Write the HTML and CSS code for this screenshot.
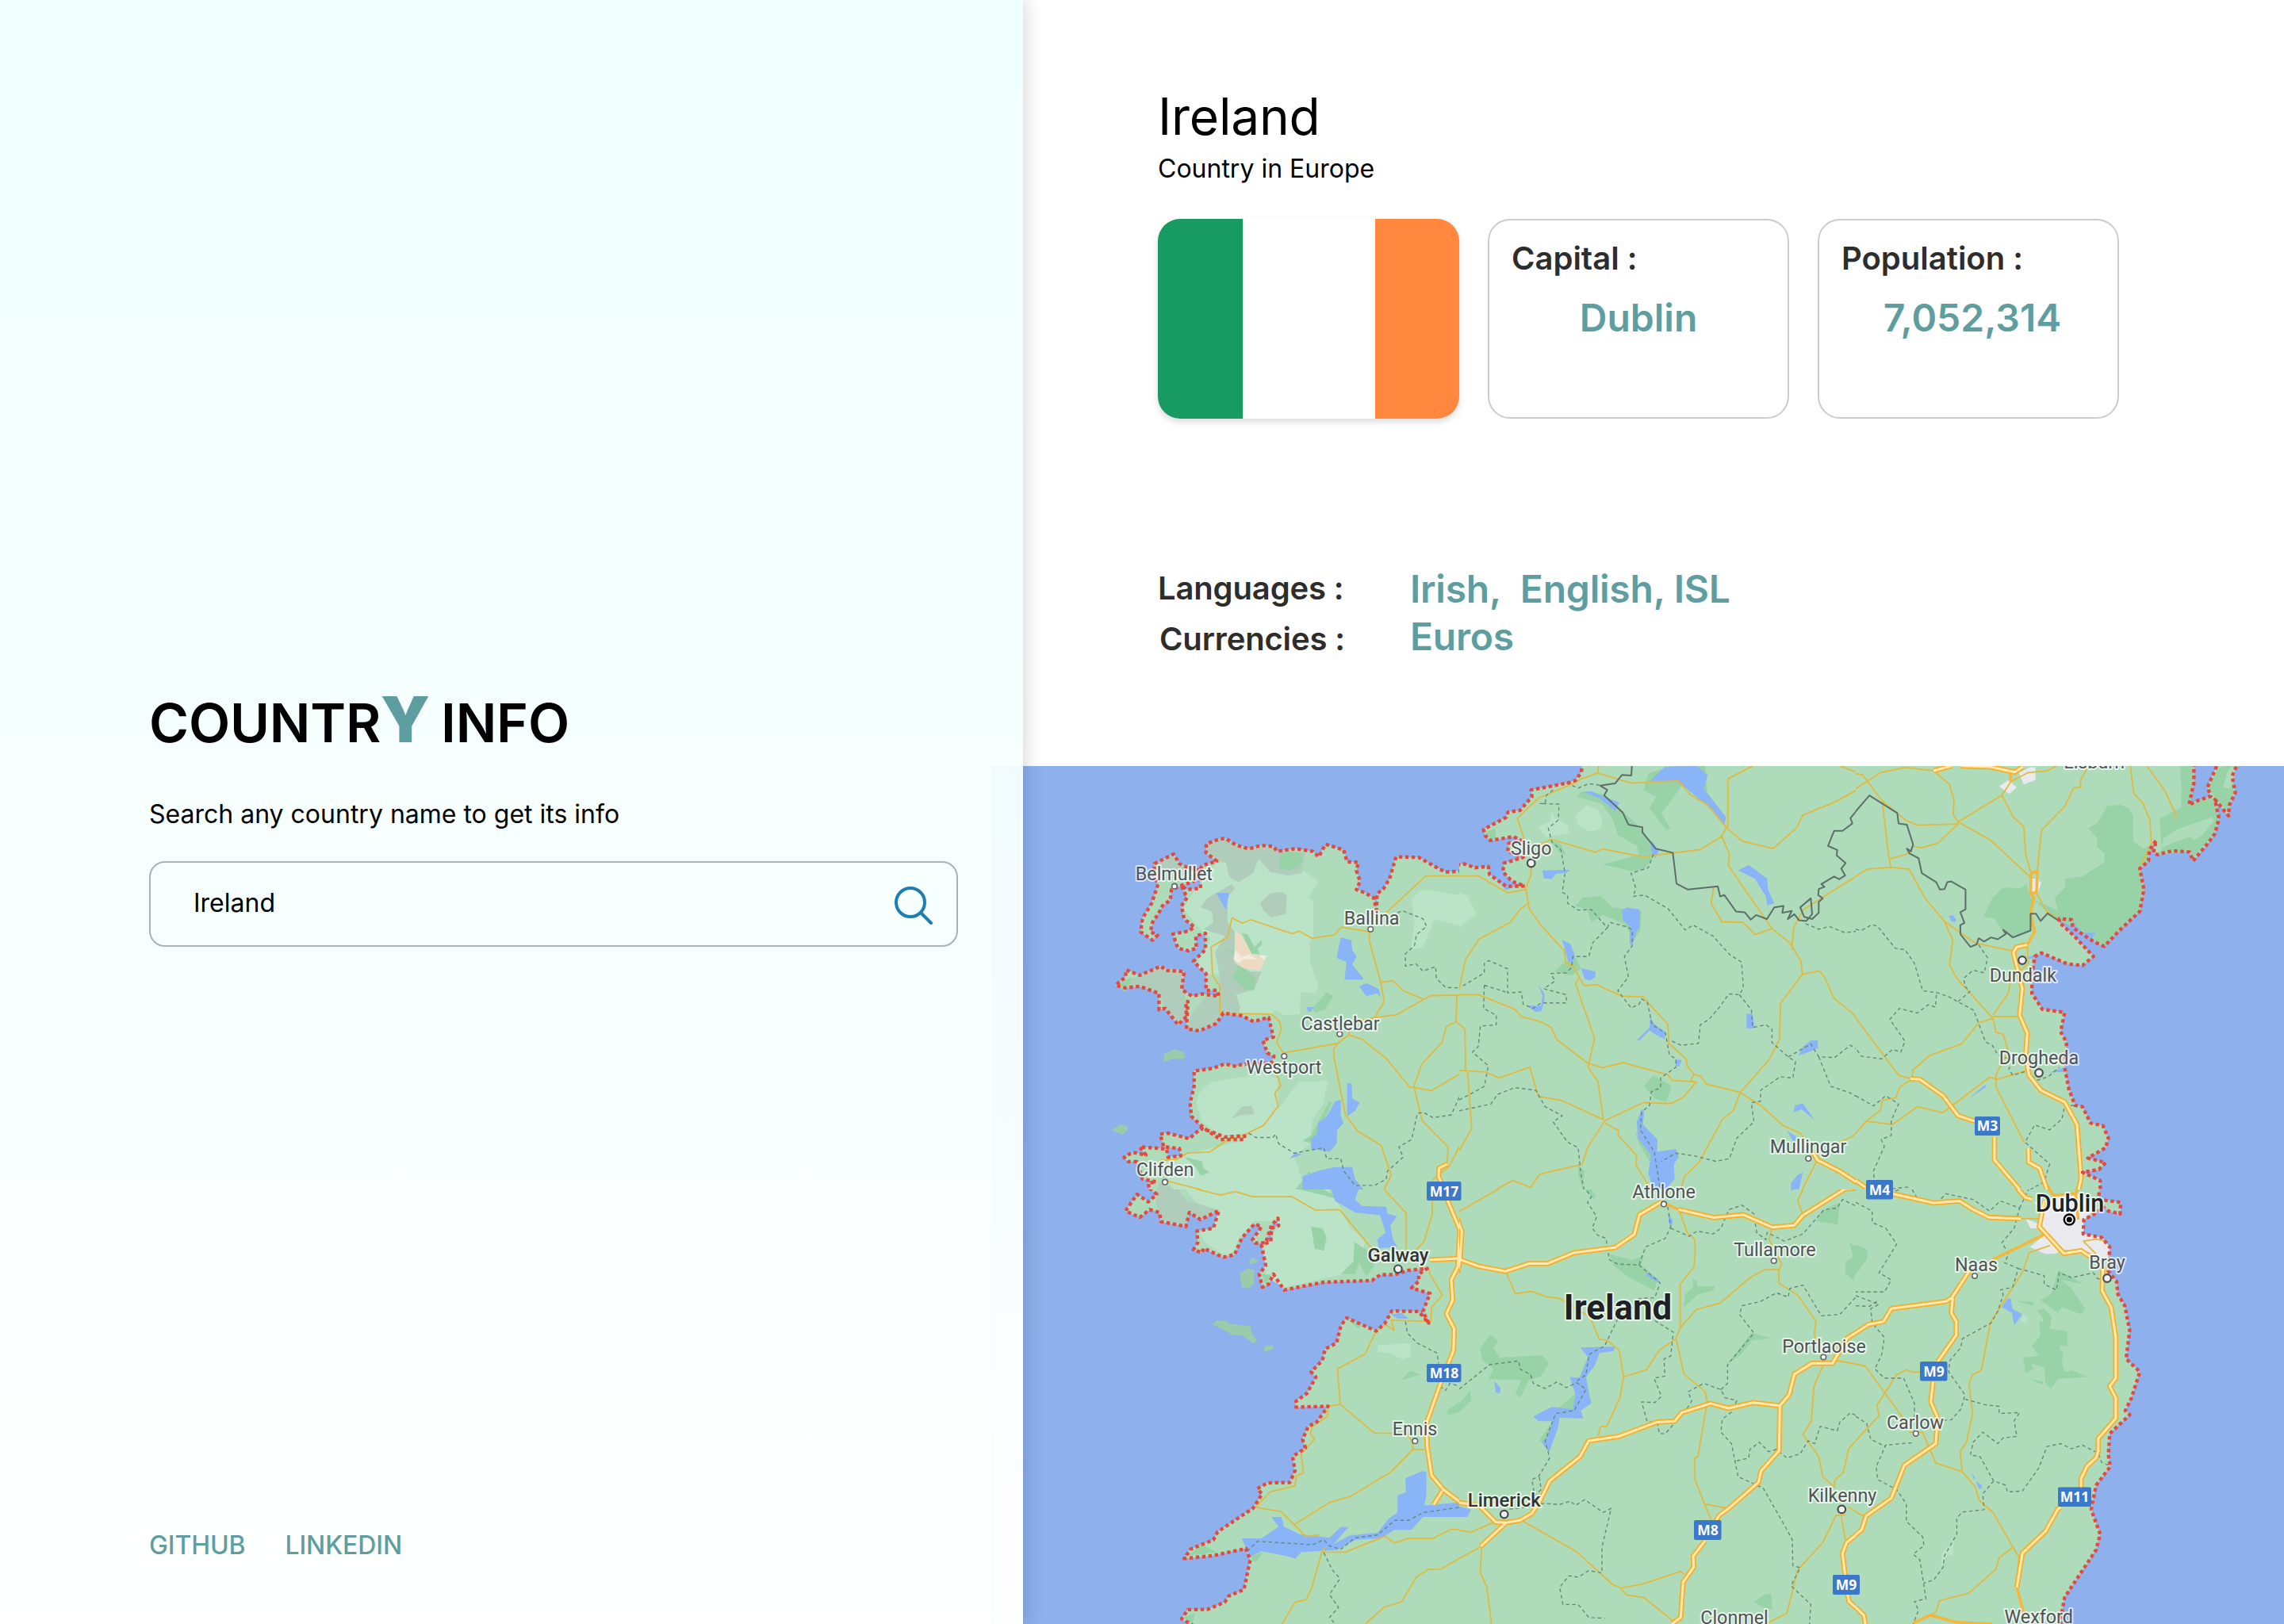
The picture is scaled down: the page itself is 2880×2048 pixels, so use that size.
FILE: index.html
```html
<!DOCTYPE html>
<html lang="en">
<head>
<meta charset="utf-8">
<title>Country Info</title>
<link rel="stylesheet" href="styles.css">
</head>
<body>
<div class="app">
  <aside class="search-panel">
    <h1 class="brand">COUNTR<span class="brand-y">Y</span> INFO</h1>
    <p class="hint">Search any country name to get its info</p>
    <div class="search-box">
      <span class="search-value">Ireland</span>
      <svg class="search-icon" viewBox="0 0 50 50"><circle cx="22" cy="22" r="18"/><path d="M35.500 35.500 L48 48"/></svg>
    </div>
    <nav class="links"><a>GITHUB</a><a>LINKEDIN</a></nav>
  </aside>
  <main class="details">
    <section class="info">
      <h2 class="country">Ireland</h2>
      <p class="region">Country in Europe</p>
      <div class="cards">
        <div class="flag"><i class="green"></i><i class="white"></i><i class="orange"></i></div>
        <div class="card"><span class="label">Capital :</span><span class="value">Dublin</span></div>
        <div class="card"><span class="label">Population :</span><span class="value value-wide">7,052,314</span></div>
      </div>
      <div class="facts">
        <span class="label">Languages :</span><span class="value">Irish,&nbsp; English, ISL</span>
        <span class="label label-second">Currencies :</span><span class="value">Euros</span>
      </div>
    </section>
    <svg class="map" viewBox="1290 966 1590 1082">
      <!-- north west -->
      <svg x="1280" y="960" width="560" height="540" viewBox="0 0 1568 1568" preserveAspectRatio="none">
        <g class="land">
          <path id="nw" d="M1600 400 L1520 406 L1490 390 L1425 352 L1345 350 L1322 430 L1300 468 L1278 485 L1276 545 L1266 500 L1235 482 L1205 470 L1218 440 L1205 400 L1212 370 L1172 368 L1160 325 L1096 304 L1072 350 L1052 330 L990 320 L925 330 L912 312 L868 308 L826 321 L780 307 L745 284 L722 284 L675 303 L674 335 L712 366 L660 382 L652 400 L655 465 L605 470 L587 455 L607 500 L587 530 L597 578 L633 607 L612 622 L557 633 L575 685 L612 694 L640 685 L638 640 L672 630 L672 690 L630 733 L674 778 L674 840 L712 838 L720 860 L660 852 L625 860 L608 850 L588 835 L597 770 L532 766 L515 750 L440 784 L392 764 L390 790 L355 820 L390 830 L440 824 L508 850 L508 910 L530 905 L575 965 L605 935 L603 880 L610 880 L605 980 L650 987 L712 960 L735 922 L800 932 L842 953 L895 938 L912 1010 L875 1022 L890 1068 L914 1080 L905 1105 L800 1110 L782 1118 L740 1108 L700 1124 L632 1134 L632 1190 L618 1250 L622 1300 L665 1342 L725 1385 L810 1385 L810 1372 L740 1376 L690 1355 L655 1345 L615 1382 L540 1362 L512 1365 L525 1412 L580 1418 L585 1445 L540 1450 L535 1420 L440 1412 L462 1442 L415 1432 L385 1450 L400 1466 L430 1466 L440 1500 L450 1530 L498 1540 L470 1545 L480 1600 L1600 1600 Z"/>
          <path id="mullet" d="M652 400 L605 388 L580 375 L560 340 L492 375 L490 420 L505 450 L482 520 L450 575 L443 625 L485 655 L503 637 L478 625 L485 590 L505 560 L520 530 L548 508 L552 470 L587 455 L630 440 Z"/>
        </g>
        <path class="islet" d="M525 1072 L560 1055 L597 1064 L597 1088 L555 1090 L525 1102Z M340 1352 L370 1330 L398 1336 L398 1350 L380 1368Z"/>
        <path class="upland" d="M712 372 L745 372 L760 430 L790 442 L860 360 L900 405 L965 418 L1020 402 L1070 440 L1035 500 L1052 510 L1052 640 L1040 665 L1042 740 L1070 820 L1060 850 L1008 845 L1005 925 L950 930 L915 910 L910 925 L795 920 L770 860 L722 780 L690 780 L650 760 L648 720 L680 680 L690 650 L640 600 L597 540 L615 500Z M640 1250 L650 1215 L690 1175 L870 1145 L925 1160 L930 1260 L880 1335 L815 1365 L725 1370 L660 1320Z M1000 1175 L1105 1170 L1085 1260 L1050 1310 L1040 1400 L985 1450 L1000 1490 L1020 1568 L560 1568 L510 1470 L600 1440 L800 1390 L940 1260Z M1400 500 L1440 470 L1568 490 L1568 600 L1480 580 L1440 680 L1395 690 L1410 600Z"/>
        <path class="bog" d="M675 335 L675 303 L722 284 L745 284 L826 321 L912 312 L925 330 L990 330 L1025 335 L1010 410 L965 418 L900 405 L860 355 L840 410 L790 442 L755 420 L745 372 L712 358Z M500 372 L555 345 L580 380 L600 395 L560 400 L500 395Z M655 535 L680 500 L765 450 L775 465 L750 500 L750 590 L775 625 L775 740 L830 770 L870 770 L845 835 L780 855 L795 900 L790 920 L735 920 L712 960 L650 987 L610 980 L620 930 L680 855 L720 870 L722 780 L705 700 L740 640 L665 615 L700 590 L695 550Z M865 520 L900 485 L945 478 L960 495 L955 560 L905 572 L875 545Z M400 800 L450 784 L515 755 L590 765 L590 830 L603 880 L600 940 L575 960 L530 905 L510 850 L440 824 L400 830Z M765 1308 L800 1265 L835 1262 L845 1292 L800 1295Z M510 1540 L560 1568 L500 1568Z"/>
        <path class="forest" d="M935 342 L960 330 L1005 335 L1015 355 L1005 385 L970 400 L932 388Z M800 630 L820 632 L845 680 L870 655 L872 670 L855 688 L865 705 L835 705Z M740 690 L772 690 L770 708Z M765 790 L790 745 L815 765 L850 795 L843 838 L815 835Z M1050 905 L1100 845 L1122 860 L1095 910 L1060 920Z M355 820 L390 800 L415 790 L390 845Z M1015 1390 L1045 1370 L1110 1245 L1120 1250 L1050 1400Z M600 1450 L660 1465 L665 1490 L688 1505 L655 1518 L640 1490Z M990 1568 L1040 1500 L1060 1568Z"/>
        <path class="sand" d="M776 620 L802 640 L835 705 L885 722 L865 768 L800 755 L775 730Z"/>
        <path class="sand-light" d="M776 690 L800 718 L825 708 L855 725 L805 725 L790 740 L772 728Z M860 710 L888 712 L880 728Z"/>
        <path class="lake" d="M710 482 L755 482 L745 545 L722 505Z M1150 645 L1187 655 L1190 690 L1206 715 L1190 745 L1230 795 L1225 800 L1163 800 L1170 735 L1135 720Z M1215 825 L1240 812 L1285 835 L1290 865 L1280 850 L1240 860Z M1030 900 L1052 900 L1045 918 L1032 915Z M1172 1178 L1188 1180 L1190 1235 L1217 1250 L1200 1280 L1172 1300Z M1130 1245 L1150 1240 L1150 1300 L1160 1325 L1137 1350 L1135 1400 L1110 1430 L1045 1420 L1045 1385 L1065 1365 L1070 1325 L1100 1300Z M970 1455 L990 1432 L1012 1440Z M1015 1520 L1070 1500 L1130 1486 L1190 1486 L1200 1530 L1230 1568 L1015 1568Z"/>
        <path class="road" d="M1310 555 L1450 420 L1568 420 M1255 625 L1152 607 L1128 636 L1048 648 L1003 622 L978 632 L832 580 L803 593 L766 573 L750 645 L692 680 L697 783 L722 823 L724 924 L905 926 L933 952 L940 982 L923 1030 L947 1068 L1140 1033 L1178 1002 L1225 1018 L1310 1088 L1392 1192 L1470 1206 L1568 1146 M1178 1002 L1180 960 L1270 938 L1303 880 L1291 810 L1250 655 L1252 620 M1291 810 L1333 803 L1370 840 L1443 872 L1348 928 L1270 938 M1443 872 L1468 858 L1568 856 M1560 856 L1557 953 L1522 972 L1508 1028 L1435 1110 L1408 1190 L1437 1316 L1529 1413 L1525 1475 M1557 953 L1568 965 M1140 1033 L1125 1052 L1126 1085 L1166 1295 L1210 1355 L1292 1406 L1328 1515 L1303 1568 M923 1145 L938 1188 L917 1215 L929 1262 L878 1333 L810 1368 L745 1390 L687 1431 L610 1434 L570 1458 L515 1462 M529 1535 L655 1568 M1568 1410 L1535 1480 L1473 1535"/>
        <path class="county" d="M1350 555 L1367 547 L1440 577 L1453 605 L1417 635 L1410 675 L1378 705 L1378 750 L1415 742 L1440 768 L1485 752 L1487 795 L1520 828 L1568 830 M825 1362 L850 1378 L910 1378 L920 1365 L930 1400 L985 1435 L1090 1415 L1100 1455 L1150 1455 L1160 1500 L1200 1553 L1270 1553 L1310 1530 L1315 1500 L1370 1450 L1355 1412 L1400 1385 L1420 1290 L1440 1285 L1475 1305 L1540 1295 L1568 1230"/>
        <g class="motorway-case"><path id="nw-motorway" d="M1525 1475 L1497 1490 L1495 1520 L1515 1568"/></g>
        <use class="motorway" href="#nw-motorway"/>
        <use class="coast" href="#nw"/><use class="coast" href="#mullet"/>
      </svg>
      <!-- north -->
      <svg x="1840" y="960" width="500" height="540" viewBox="0 0 1500 1568" preserveAspectRatio="none">
        <g class="land"><path id="north" d="M468 -20 L462 40 L440 70 L415 78 L345 92 L272 105 L275 130 L230 180 L185 186 L178 205 L92 250 L98 272 L118 290 L205 276 L235 290 L188 300 L183 330 L242 352 L170 373 L165 405 L200 440 L248 457 L178 458 L115 415 L110 385 L60 390 L20 376 L-40 384 L-40 1620 L1600 1620 L1600 -20 Z"/></g>
        <path class="upland" d="M440 200 L480 162 L522 175 L540 210 L538 245 L495 258 L450 235Z M297 240 L345 220 L350 180 L362 205 L410 235 L415 262 L330 278Z M0 482 L30 492 L65 560 L0 608Z"/>
        <path class="forest" d="M462 110 L545 120 L660 220 L700 262 L738 310 L735 350 L700 395 L650 402 L542 378 L680 342 L672 310 L600 270 L580 210 L540 155 L445 130Z M715 45 L800 17 L930 17 L940 130 L845 80 L835 100 L765 190 L798 245 L785 255 L720 172 L745 130 L697 105Z M440 530 L465 500 L535 492 L580 535 L690 550 L685 620 L660 655 L625 595 L540 562 L500 590 L485 545Z M360 770 L400 735 L440 715 L460 760 L425 785Z M345 290 L385 305 L405 345 L380 335Z M697 1190 L735 1150 L805 1190 L782 1248 L740 1235Z M660 1350 L680 1380 L740 1450 L720 1465 L680 1400Z M450 1480 L475 1500 L465 1568 L450 1510Z M98 262 L135 245 L140 280 L118 290Z"/>
        <path class="lake" d="M778 20 L900 17 L940 50 L925 100 L1010 205 L1003 235 L940 165 L825 72 L722 72Z M468 112 L500 110 L605 152 L590 182 L530 135Z M315 400 L420 397 L405 408 L365 413 L350 432 L320 428Z M135 385 L165 400 L210 460 L175 472 L140 425Z M728 290 L755 330 L742 355 L725 325Z M615 545 L635 535 L683 543 L683 605 L672 620 L655 675 L645 668 L645 605 L620 582Z M1055 400 L1095 380 L1165 430 L1168 470 L1192 520 L1165 528 L1160 495 L1118 430Z M390 655 L420 668 L437 710 L432 735 L412 735 L400 690Z M460 757 L515 770 L515 790 L495 802 L475 798Z M300 820 L322 850 L322 880 L310 915 L290 918 L255 895 L310 895 L315 860Z M722 935 L735 960 L778 990 L778 1018 L740 1000 L720 985 L680 1025 L675 1018 L720 975Z M818 1092 L842 1095 L832 1118 L818 1115Z M1087 925 L1110 925 L1117 978 L1087 978Z M1283 1078 L1300 1045 L1330 1022 L1357 1022 L1357 1050 L1330 1062Z M1265 1285 L1270 1260 L1300 1252 L1345 1315 L1295 1275Z M690 1273 L700 1285 L695 1330 L750 1385 L748 1430 L820 1420 L830 1450 L812 1475 L815 1530 L780 1568 L735 1568 L715 1510 L725 1440 L675 1380 L672 1320Z M1240 1353 L1275 1375 L1268 1400Z M1255 1545 L1280 1515 L1300 1505 L1285 1568 L1255 1568Z"/>
        <path class="road" d="M527 17 L524 43 L460 65 L440 78 L300 135 L220 208 L247 290 M524 43 L650 80 L828 72 L878 125 L940 160 L1010 243 L1070 292 L1187 320 L1275 245 L1300 197 L1420 150 L1560 75 M1016 243 L1016 65 L1110 17 M1440 17 L1530 50 L1560 95 M1010 243 L993 275 L1022 340 L1018 382 L1120 525 L1183 613 L1250 665 L1292 730 L1298 780 L1362 768 L1382 790 L1417 867 L1490 925 L1560 1018 M993 275 L912 323 L695 350 L543 321 L515 333 L348 286 L300 308 M1183 613 L1120 635 L1073 590 L993 588 L953 520 L963 460 M1258 690 L1265 610 L1300 545 L1375 498 L1545 395 M0 420 L73 420 L183 482 L250 470 L272 415 L272 385 M252 465 L265 540 L310 602 L397 693 L404 740 L430 750 L472 822 L520 818 L614 860 L695 863 L789 963 L793 1033 L858 1090 L862 1115 L888 1146 L913 1153 L935 1182 L1063 1213 L1143 1262 L1225 1334 L1290 1362 L1340 1430 M265 517 L230 543 L193 590 L75 651 L24 725 L0 835 M452 795 L440 815 L512 1015 L487 1120 L525 1172 L545 1312 L387 1242 L300 1228 L267 1120 L152 1160 L100 1138 L0 1132 M0 855 L72 855 L210 908 L235 935 L315 956 L347 974 L370 1020 L485 1105 L542 1122 L620 1104 L789 1148 L805 1168 L898 1174 L845 1232 L803 1253 L697 1250 L552 1315 L487 1412 L465 1476 L305 1512 L270 1560 L202 1535 L140 1568 M875 1172 L888 1146 M1298 780 L1215 887 L1212 1018 L1172 1093 L1063 1213 L1038 1278 L995 1312 L907 1468 L852 1520 L838 1568 M552 1325 L602 1352 L602 1370 L672 1445 L668 1477 L725 1568 M0 962 L22 982 L24 1132 L32 1140 L47 1345 L0 1425 M1353 1462 L1298 1568 M1440 1395 L1490 1372 L1550 1308"/>
        <path class="county" d="M405 80 L450 98 L490 82 L530 87 M355 105 L330 125 L325 155 L305 155 L378 157 L375 215 L337 245 L350 295 L385 325 L400 410 L390 480 L410 490 L410 520 L450 545 L500 543 L560 610 L505 665 L490 715 L430 715 L425 755 L405 775 L347 777 L362 805 L320 833 L405 855 L405 885 L310 885 L280 905 L242 890 L235 845 L183 848 L183 760 L112 730 L95 740 L95 775 L15 822 M560 610 L570 590 L640 608 L655 620 L655 675 L625 715 L640 790 L600 840 L650 903 L680 890 L690 870 L712 885 L730 965 L780 995 L795 1075 L820 1090 L820 1120 L762 1160 L762 1195 L727 1210 L720 1260 L690 1285 L685 1350 L738 1430 L760 1568 M735 340 L715 390 L650 410 L668 465 L658 495 L700 490 L790 540 L855 618 L885 600 L960 640 L1025 710 L1068 735 L1075 830 L1060 855 L1020 852 L985 900 L945 945 L912 965 L905 1033 L840 1040 L805 1025 M1060 855 L1105 910 L1110 975 L1160 965 L1183 980 L1183 1030 L1245 1083 L1272 1100 L1262 1160 L1215 1155 L1140 1205 L1140 1245 L1105 1250 L1115 1320 L1050 1380 L1022 1455 L970 1465 L890 1445 L820 1435 L765 1465 M1245 1083 L1330 1035 L1360 1082 L1420 1085 L1480 1040 L1560 1085 M1360 1082 L1405 1190 L1480 1215 L1560 1260 M95 820 L175 845 M95 820 L92 905 L140 930 L140 965 L80 970 L72 1045 L50 1065 L110 1115 L95 1190 L40 1220 L0 1240 M0 1280 L120 1255 L145 1220 L210 1195 L290 1205 L325 1265 L390 1298 L355 1320 L410 1395 L450 1415 L460 1510 L472 1568 M1310 595 L1360 615 L1400 605 L1460 628 L1520 620 L1555 598"/>
        <path class="border" d="M653 17 L651 52 L616 50 L590 81 L533 89 L560 105 L548 125 L618 187 L640 232 L693 242 L693 260 L743 320 L808 335 L822 448 L865 470 L978 458 L987 495 L1003 490 L1047 550 L1080 553 L1103 580 L1123 563 L1164 578 L1192 535 L1227 530 L1222 555 L1258 548 L1243 578 L1268 560 L1285 582 L1313 585 L1335 560 L1330 502 L1290 535 L1305 570 L1335 578 L1360 555 L1360 515 L1375 502 L1358 490 L1360 468 L1382 460 L1370 450 L1418 422 L1438 432 L1460 418 L1445 393 L1462 373 L1428 345 L1430 325 L1395 310 L1418 255 L1450 255 L1487 228 L1480 208 L1550 128"/>
        <g class="motorway-case"><path id="north-motorway" d="M1340 1435 L1355 1460 L1440 1502 L1540 1565"/></g>
        <use class="motorway" href="#north-motorway"/>
        <use class="coast" href="#north"/>
      </svg>
      <!-- north east -->
      <svg x="2340" y="960" width="540" height="540" viewBox="0 0 1568 1568" preserveAspectRatio="none">
        <g class="land"><path id="ne" d="M-40 -40 L1238 -40 L1238 80 L1220 160 L1250 145 L1300 128 L1288 95 L1325 10 L1325 -40 L1420 -40 L1378 55 L1390 115 L1368 160 L1365 200 L1315 140 L1330 210 L1315 265 L1290 300 L1235 365 L1222 332 L1160 328 L1105 342 L1090 335 L1100 290 L1075 325 L1072 365 L1040 393 L1055 470 L1040 550 L965 620 L910 678 L870 660 L795 610 L790 580 L745 577 L745 590 L800 640 L870 715 L830 748 L775 742 L680 702 L655 715 L645 790 L645 850 L683 908 L765 920 L750 990 L772 1030 L765 1120 L780 1200 L803 1260 L830 1265 L860 1325 L905 1335 L925 1380 L915 1415 L850 1453 L915 1470 L890 1495 L830 1505 L895 1535 L895 1620 L-40 1620 Z"/></g>
        <path class="forest" d="M850 245 L885 225 L920 165 L965 158 L1000 172 L1016 200 L1016 295 L1055 320 L1085 300 L1070 365 L1040 393 L1055 470 L1040 550 L965 620 L910 678 L870 655 L795 605 L735 580 L700 550 L655 510 L638 560 L640 620 L570 645 L550 620 L540 630 L508 575 L468 570 L500 500 L540 462 L600 465 L625 450 L640 500 L740 548 L728 500 L768 460 L765 430 L830 422 L910 370 L912 340 L882 312 L885 282Z M1187 17 L1235 17 L1235 90 L1225 150 L1300 130 L1325 160 L1330 210 L1315 265 L1235 355 L1222 332 L1105 342 L1120 320 L1112 210 L1190 170 L1193 105Z M1345 17 L1400 17 L1378 55 L1385 115 L1365 190 L1315 135 L1290 95 L1325 30Z"/>
        <path class="land" d="M1128 282 L1180 248 L1305 205 L1310 220 L1270 270 L1240 290 L1225 275 L1120 315Z M1345 95 L1360 40 L1380 17 L1390 50 L1370 100Z"/>
        <path class="city" d="M597 42 L640 22 L658 22 L658 68 L615 85Z M525 92 L558 70 L590 95 L562 120Z M640 430 L660 430 L680 445 L665 485 L645 480Z"/>
        <path class="lake" d="M340 568 L355 563 L368 580 L362 590 L350 585Z M795 585 L830 628 L880 628 L865 645 L880 665 L795 615Z M630 715 L655 712 L655 722 L630 722Z M708 1140 L765 1120 L765 1138Z M415 1235 L475 1183 L475 1195Z"/>
        <path class="road" d="M0 45 L25 50 L97 145 L182 215 L225 234 L375 230 L300 300 L240 317 L208 310 L195 338 L122 358 M0 100 L90 42 L182 22 L285 35 L343 85 L360 142 L357 195 L375 222 L495 290 L640 425 M375 222 L535 125 L568 75 M535 125 L578 205 L615 240 L622 340 L642 410 M568 75 L630 42 L700 35 L735 17 M848 25 L822 72 L825 95 L798 98 L765 165 L680 253 L665 400 M765 165 L798 98 M1005 17 L1018 118 L1052 155 L1077 215 L1083 305 L1042 382 M1068 20 L1130 105 L1178 208 M97 145 L122 358 L130 388 M0 422 L43 395 L130 388 L195 395 L255 503 L325 587 L437 665 L575 695 M325 587 L355 655 L343 745 L370 795 L503 942 L513 992 L540 1000 L558 1060 L513 1150 L513 1192 L618 1398 M660 480 L700 552 L745 577 M503 935 L595 935 M503 930 L558 850 L568 800 M503 942 L450 958 L388 1035 L270 1078 L210 1130 L205 1165 L162 1192 L147 1232 L97 1242 L90 1278 L38 1318 L0 1363 M38 1318 L135 1330 L225 1265 L318 1287 L357 1258 L490 1157 L520 1165 L625 1132 M0 940 L157 1150 L200 1162 M628 675 L632 740 L600 770"/>
        <path class="trunk" d="M642 410 L665 402 L662 480 L640 485 Z M640 485 L652 500 L640 560 L655 625 L628 672 M568 75 L565 45 M690 1540 L712 1568"/>
        <path class="county" d="M0 615 L20 620 L60 598 L80 605 L145 685 L180 690 L215 740 L245 840 L300 848 L340 862 L432 912 L475 1028 L500 1040 L520 1075 L585 1100 L560 1125 L575 1150 L625 1135 L665 1168 L705 1155 L745 1120 M450 672 L483 720 L470 775 L430 765 L395 795 L400 825 L418 843 L375 880 M295 855 L292 900 L265 892 L225 922 L160 905 L125 945 L180 1025 L165 1065 L135 1055 L95 1090 L20 1080 L0 1050 M0 1225 L65 1262 L110 1225 L157 1255 L130 1315 L130 1370 L93 1385 L105 1410 L65 1500 L70 1568 M800 1260 L765 1260 L755 1310 L710 1350 L655 1332 L620 1395 L710 1475 L690 1540 L640 1568 M110 1568 L200 1558"/>
        <path class="border" d="M-10 195 L50 125 L152 190 L157 228 L187 232 L210 305 L202 330 L187 320 L197 338 L230 355 L242 410 L295 443 L308 470 L325 468 L335 443 L350 440 L402 470 L402 542 L383 553 L398 592 L383 600 L383 633 L420 680 L443 670 L450 648 L470 660 L495 645 L520 652 L550 632 L540 617 L575 645 L640 620 L640 558 L660 558 L677 585 L702 557 L745 585"/>
        <g class="motorway-case"><path id="ne-motorway" d="M285 35 L350 17 M385 17 L490 20 L582 40 L612 20 M628 672 L590 680 L577 700 L610 832 L600 930 L628 995 L622 1085 L635 1150 L678 1205 L765 1248 L810 1330 L825 1525 L812 1590 M200 1162 L235 1165 L320 1225 L375 1298 L435 1318 M508 1375 L508 1460 L600 1568 M632 1418 L633 1468 L673 1490 L700 1568 M0 1535 L35 1560"/></g>
        <use class="motorway" href="#ne-motorway"/>
        <use class="coast" href="#ne"/>
      </svg>
      <!-- south west -->
      <svg x="1280" y="1500" width="560" height="548" viewBox="0 55 1568 1513" preserveAspectRatio="none">
        <g class="land"><path id="sw" d="M455 -40 L450 18 L498 28 L465 42 L500 72 L470 98 L430 72 L390 130 L440 152 L475 125 L510 135 L515 167 L603 184 L615 135 L655 160 L720 128 L700 190 L642 200 L645 240 L630 265 L660 275 L665 260 L735 291 L775 282 L800 225 L845 175 L870 185 L838 230 L848 242 L885 240 L905 180 L928 155 L930 182 L905 190 L903 235 L870 250 L885 320 L862 350 L873 395 L895 385 L912 350 L950 405 L1090 378 L1260 372 L1290 352 L1340 352 L1385 337 L1455 330 L1425 350 L1425 375 L1400 398 L1465 417 L1440 480 L1460 520 L1425 480 L1330 478 L1305 522 L1275 548 L1170 502 L1150 530 L1135 590 L1095 610 L1085 650 L1045 690 L1062 708 L1030 765 L992 792 L992 813 L1105 810 L1065 865 L1035 880 L1015 925 L1025 955 L980 985 L988 1035 L970 1075 L890 1077 L855 1097 L872 1115 L840 1165 L715 1247 L700 1275 L620 1307 L597 1340 L700 1330 L815 1305 L830 1345 L808 1448 L755 1470 L740 1492 L680 1517 L610 1518 L588 1550 L620 1568 L700 1620 L1640 1620 L1640 -40 Z"/></g>
        <path class="islet" d="M697 525 L710 512 L748 512 L755 522 L800 528 L830 530 L838 560 L855 580 L843 592 L800 562 L770 562 L730 540Z M876 615 L885 598 L912 598 L910 610 L882 622Z M792 350 L820 330 L845 335 L843 385 L825 400 L800 395Z M822 310 L838 292 L860 302 L838 315Z"/>
        <path class="upland" d="M550 0 L1012 0 L1015 40 L1100 50 L1150 120 L1180 185 L1235 230 L1225 300 L1160 350 L950 395 L885 360 L880 255 L905 235 L930 165 L845 165 L790 225 L770 275 L740 285 L670 240 L650 205 L700 190 L720 128 L640 100Z M1280 598 L1395 590 L1398 635 L1370 648 L1325 625 L1280 622Z"/>
        <path class="bog" d="M500 60 L560 30 L605 95 L720 128 L655 160 L615 135 L603 180 L515 160 L498 100Z"/>
        <path class="forest" d="M1045 185 L1085 190 L1100 220 L1090 268 L1058 262Z M1198 238 L1240 265 L1268 320 L1240 358 L1215 310 L1200 350 L1150 350 L1195 305Z M983 50 L1015 20 L1130 75 L1125 85Z M1170 505 L1230 530 L1210 538Z M1362 720 L1395 685 L1430 700Z M1525 825 L1568 795 L1568 830 L1528 842Z M610 1330 L660 1290 L712 1318Z M830 1335 L880 1315 L850 1355Z M590 1545 L635 1530 L625 1568Z M870 350 L905 352 L885 385Z"/>
        <path class="lake" d="M1015 0 L1190 0 L1222 30 L1200 90 L1225 112 L1310 115 L1315 140 L1348 148 L1325 180 L1335 230 L1350 255 L1285 260 L1278 230 L1308 205 L1288 145 L1200 135 L1130 95 L1110 40 L1015 38Z M1378 1060 L1440 1035 L1452 1040 L1452 1120 L1445 1155 L1568 1145 L1568 1195 L1440 1195 L1400 1240 L1340 1240 L1290 1270 L1200 1275 L1140 1310 L1010 1318 L990 1340 L960 1332 L870 1315 L830 1335 L800 1270 L870 1270 L930 1230 L905 1195 L940 1195 L950 1230 L1005 1255 L1110 1268 L1150 1230 L1178 1230 L1125 1290 L1180 1260 L1280 1250 L1320 1200 L1350 1180 L1350 1120 L1380 1110Z M1328 490 L1365 485 L1390 505 L1350 505Z"/>
        <path class="road" d="M529 25 L725 75 L777 62 L838 80 L977 80 L1060 127 L1145 125 L1250 250 L1330 315 M1303 55 L1328 0 M1303 55 L1381 138 L1381 262 M1473 20 L1473 140 L1443 238 L1415 265 M1460 330 L1465 350 L1508 423 L1470 465 L1468 515 L1328 510 L1338 545 L1307 525 L1275 548 L1235 628 L1138 680 L1148 803 L1105 810 L1103 845 L1050 880 L1042 905 L1057 925 L1010 975 L1018 1042 L993 1052 L988 1087 L900 1108 L850 1162 L938 1176 L985 1222 L1110 1145 L1185 1123 L1325 1040 L1405 960 L1450 960 M1148 803 L1268 903 L1385 905 L1402 935 L1405 960 M985 1222 L1027 1263 L1077 1258 M1095 1300 L1083 1317 L1165 1318 L1307 1262 L1338 1286 L1387 1270 L1475 1270 L1540 1238 L1568 1240 M1083 1317 L1047 1443 L1028 1483 L988 1492 L943 1568 M1237 1568 L1302 1510 L1365 1490 L1418 1403 L1458 1378 L1503 1377 L1568 1340"/>
        <path class="county" d="M1165 0 L1195 40 L1275 40 L1310 25 L1312 0 M1378 515 L1385 555 L1420 590 L1490 625 L1495 660 M1500 740 L1520 755 L1535 730 L1568 740 M820 1315 L855 1280 L1050 1292 L1090 1275 L1108 1295 L1150 1308 L1200 1268 L1280 1258 L1340 1207 L1390 1207 L1440 1180 L1568 1162 M1090 1320 L1120 1380 L1147 1410 L1110 1465 L1142 1510 L1110 1545 L1130 1568"/>
        <g class="motorway-case"><path id="sw-motorway" d="M1495 0 L1530 100 L1570 195 L1563 325 L1540 370 L1545 440 L1523 488 L1550 540 L1548 615 L1500 735 L1452 870 L1455 950 L1470 1050 L1512 1100 L1575 1146 M1465 300 L1575 295 M1508 1105 L1478 1152"/></g>
        <use class="motorway" href="#sw-motorway"/>
        <use class="coast" href="#sw"/>
      </svg>
      <!-- south -->
      <svg x="1840" y="1500" width="500" height="548" viewBox="0 55 1500 1513" preserveAspectRatio="none">
        <path class="land" d="M-40 -40 H1600 V1620 H-40 Z"/>
        <path class="forest" d="M568 280 L655 300 L697 285 L690 320 L750 365 L738 408 L640 360 L585 320Z M882 365 L900 375 L900 392 L968 392 L960 408 L905 420 L848 465 L855 420 L885 395Z M1475 238 L1548 285 L1515 320 L1490 372 L1460 345 L1462 310 L1490 290Z M1350 165 L1370 130 L1440 100 L1432 178Z M78 610 L118 560 L147 580 L130 610 L155 640 L315 632 L340 660 L310 705 L262 720 L232 780 L212 765 L235 720 L110 715 L130 680 L88 650Z M1015 660 L1050 620 L1105 555 L1180 572 L1110 580 L1060 635Z M0 800 L42 755 L45 790 L0 830Z M455 715 L480 650 L490 650 L470 740 L440 820 L375 815 L435 770Z M300 935 L345 870 L365 865 L330 930Z M1115 1490 L1150 1468 L1180 1462 L1185 1515 L1165 1520Z M465 0 L515 75 L512 92 L470 50Z"/>
        <path class="lake" d="M720 0 L812 0 L790 45 L740 50Z M1255 60 L1260 30 L1285 0 L1302 0 L1290 45Z M458 605 L588 602 L585 618 L530 625 L512 670 L490 695 L480 710 L492 770 L500 800 L460 825 L470 852 L380 850 L372 890 L340 970 L312 935 L330 920 L355 862 L300 862 L280 845 L350 812 L430 820 L440 770 L418 708 L455 710 L488 640Z M133 722 L155 745 L155 765 L138 762Z M705 342 L755 370 L750 378 L710 355Z M790 135 L808 165 L802 190 L793 170Z M0 1158 L45 1170 L30 1195 L0 1195Z"/>
        <path class="road" d="M0 132 L202 25 L270 48 L303 3 L345 0 M685 0 L722 52 M855 0 L835 55 M1328 0 L1280 95 L1297 135 M178 345 L212 418 L275 410 L328 428 L380 435 L495 500 L530 577 L560 580 L605 615 L622 708 L607 782 L558 880 L535 880 L525 915 M622 708 L708 683 L757 615 L820 575 M835 135 L862 205 L890 228 L893 265 L888 325 L836 385 L836 537 L820 572 L850 698 L930 758 L938 795 L903 985 L890 990 L892 1065 L928 1150 L953 1205 M928 1150 L1018 1165 M836 537 L897 473 L988 450 L1100 362 L1152 335 L1208 333 M1183 190 L1173 230 L1220 315 L1208 340 L1210 382 L1280 422 L1350 515 L1343 555 L1352 600 M1378 665 L1342 740 L1332 862 L1300 908 L1360 985 L1375 1055 L1420 1092 L1420 1068 L1453 1040 L1473 958 L1560 870 M1420 650 L1535 668 L1560 705 M1470 1160 L1535 1195 M1445 1195 L1462 1280 M1462 1188 L1425 1190 L1375 1285 L1280 1380 L1240 1530 L1160 1568 M240 1210 L442 1315 L580 1430 L612 1443 L632 1467 L697 1475 L810 1558 M612 1443 L697 1428 L838 1385 L852 1395 M0 1242 L45 1248 L135 1212 M0 1340 L85 1297 L80 1390 L105 1440 L122 1568"/>
        <path class="county" d="M765 0 L765 30 M465 0 L465 40 L500 80 L485 100 L520 150 L503 190 L525 215 L555 225 L568 300 L600 315 L680 318 L705 255 L780 225 L800 185 L790 120 L775 95 M680 318 L760 380 L740 432 L680 435 L650 470 L600 505 L550 600 L490 630 L480 700 L440 725 L480 750 L435 825 L365 835 L325 930 L342 990 L300 1055 L275 1065 L285 1120 L310 1100 L302 1050 M740 512 L810 552 L800 635 L775 645 L778 705 L737 712 L765 775 L740 797 L690 795 L710 860 L750 870 L757 905 L780 905 L860 820 L880 790 L865 760 L925 730 L990 752 L1005 780 L1050 790 L1030 830 L995 855 L990 900 L1030 940 L1055 1055 L1150 1095 L1240 1240 L1260 1275 L1262 1365 L1290 1372 L1255 1435 L1330 1500 L1325 1568 M800 190 L870 218 L900 200 L960 210 L990 190 L1020 125 L1070 110 L1115 140 L1125 205 L1160 230 L1165 205 L1230 235 L1300 210 L1380 125 L1430 120 L1450 90 L1560 140 M990 752 L1015 730 L1015 665 L1115 555 L1060 490 L1070 460 L1140 445 L1200 415 L1245 430 L1250 400 L1300 388 L1370 495 L1440 490 L1510 420 L1560 412 M0 750 L115 665 L225 652 L230 680 L270 700 L280 730 L325 748 L370 725 L405 745 L440 730 M190 1168 L250 1162 L320 1148 L380 1152 L420 1140 L440 1155 L475 1135 L545 1180 L575 1165 L540 1300 L540 1390 L490 1382 L450 1405 L415 1400 L380 1440 L392 1500 L450 1500 L490 1545 L550 1548 M1050 1000 L1095 990 L1100 960 L1135 935 L1170 968 L1200 960 L1240 990 L1290 975 L1320 930 L1345 940 L1365 880 L1430 895 L1440 865 L1480 832 L1540 860 L1560 925"/>
        <g class="motorway-case"><path id="south-motorway" d="M-10 150 L10 200 L3 300 L-6 345 M-6 296 L75 323 L175 340 L265 313 L335 313 L435 275 L590 257 L662 212 L682 143 L765 98 M830 125 L963 153 L1075 143 L1185 187 L1267 180 L1300 145 L1460 53 L1540 48 M1440 0 L1530 45 M1560 520 L1468 572 L1412 660 L1335 660 L1268 698 L1248 770 L1213 808 L1112 797 L1018 817 L950 800 L842 832 L815 862 L748 865 L603 915 L490 930 L457 985 L342 1070 L305 1140 L275 1183 L230 1207 L178 1215 L82 1297 M1213 808 L1210 965 L1142 1035 L1132 1075 L1020 1165 L983 1190 L965 1220 M930 1278 L885 1332 L887 1370 L847 1422 L838 1545 L805 1568 M178 1215 L138 1213 L75 1155 L-10 1144 M1560 1183 L1540 1195 L1525 1240 L1465 1285 L1450 1322 L1460 1400 M1468 1460 L1475 1490 L1530 1535 L1535 1568"/></g>
        <use class="motorway" href="#south-motorway"/>
        <path class="trunk" d="M765 98 L830 125"/>
      </svg>
      <!-- south east -->
      <svg x="2340" y="1500" width="540" height="548" viewBox="0 55 1568 1513" preserveAspectRatio="none">
        <g class="land"><path id="se" d="M-40 -40 L895 -40 L890 90 L970 100 L968 140 L925 130 L905 115 L885 135 L835 160 L833 210 L900 222 L930 255 L925 340 L955 375 L960 420 L985 460 L1003 545 L990 645 L1040 690 L1010 780 L987 825 L1003 840 L930 905 L925 980 L932 1020 L880 1085 L862 1170 L895 1255 L880 1310 L765 1475 L752 1540 L745 1620 L-40 1620 Z"/></g>
        <path class="forest" d="M675 440 L715 420 L742 335 L780 355 L835 385 L750 370 L785 395 L840 470 L825 490 L755 465 L740 485Z M590 443 L655 447 L645 460Z M665 475 L690 470 L718 500 L710 540 L775 550 L775 600 L745 598 L760 630 L755 660 L765 690 L795 685 L850 708 L775 712 L740 715 L715 750 L695 730 L690 675 L640 660 L652 680 L622 695 L612 640 L670 635 L645 600 L675 565 L672 515 L690 515Z M640 715 L690 725 L680 735Z M0 247 L45 265 L40 300 L0 350Z"/>
        <path class="upland" d="M312 1370 L315 1325 L360 1270 L355 1325 L335 1330Z M605 510 L615 490 L632 505 L618 522Z"/>
        <path class="city" d="M652 100 L690 95 L730 80 L830 70 L870 130 L835 160 L833 210 L900 222 L930 255 L920 300 L885 300 L860 275 L750 262 L735 278 L695 280 L637 255 L690 215 L668 190 L640 190 L620 155 L670 175 L680 130Z"/>
        <path class="lake" d="M535 465 L555 435 L568 435 L573 470 L610 490 L580 528 L572 485Z M425 1040 L440 1065 L430 1060Z M440 1070 L462 1085 L460 1098 L450 1095Z"/>
        <path class="road" d="M600 157 L672 157 M712 250 L635 275 L612 340 L493 518 L460 685 L428 700 L415 730 L428 835 L405 935 L382 968 L390 1038 L293 1007 L245 900 L195 900 M0 663 L35 670 L165 840 L200 895 M235 690 L210 692 L185 683 L150 700 L78 805 L85 843 L0 930 M390 1038 L437 1090 L452 1138 L503 1180 L590 1325 L600 1335 M572 1303 L525 1337 L513 1377 L415 1460 L307 1487 L293 1527 L272 1537 M0 1178 L35 1195 M833 235 L880 228 L915 235 M833 235 L880 280"/>
        <path class="county" d="M0 100 L60 130 L60 170 L110 190 L150 245 L85 345 L130 370 L105 412 L0 412 M0 425 L85 455 L55 470 L60 520 L105 570 L95 630 L70 680 L105 712 L175 712 L215 800 L215 850 M65 0 L70 25 M145 60 L200 45 L225 85 L290 110 L330 70 L430 90 L490 130 L530 95 L600 120 L580 190 L535 240 L560 280 L545 310 L595 330 L575 395 L530 405 L540 420 L520 480 L495 520 L390 575 L385 605 L345 650 L340 690 L400 770 L385 820 L350 857 L300 860 M600 120 L635 50 L690 35 M595 330 L690 355 L690 385 L735 405 L745 345 L790 362 L870 345 L885 365 L905 370 M400 785 L475 805 L525 810 L525 835 L600 832 L580 860 L590 915 L540 920 L520 940 L465 900 L430 935 L420 980 L455 985 L505 1070 L550 1085 L555 1108 L610 1105 L670 1025 L700 950 L750 940 L790 958 L830 945 L890 975 L900 1005 L925 1015 M505 1070 L465 1115 L470 1170 L390 1178 L370 1200 L370 1255 L325 1330 L320 1370 L285 1415 L250 1425 M205 937 L110 945 L75 1020 L80 1065 L150 1100 L185 1150 L185 1210 L245 1265 L250 1295 L210 1325 L235 1345 L257 1480 L215 1490 L230 1520 L210 1568 M0 845 L40 870 L55 925 L110 950 M0 460 L50 462 L85 440"/>
        <path class="trunk" d="M600 1335 L590 1440 L615 1530 M272 1537 L210 1565 M272 1537 L370 1562 L500 1568 M500 300 L690 212 M685 0 L695 40 L725 75 L805 70 L830 0 M805 70 L815 160"/>
        <g class="motorway-case"><path id="se-motorway" d="M0 20 L35 48 M135 70 L285 102 L380 95 L430 125 L487 152 L605 157 M545 0 L620 82 L645 90 M690 95 L672 185 L762 278 L825 268 L860 290 M905 325 L902 408 L935 465 L952 570 L952 712 L930 740 L952 780 L952 852 L888 922 L888 965 L880 990 L847 1018 L825 1062 L825 1095 M750 1162 L740 1168 L695 1245 L610 1322 L590 1440 M415 340 L352 432 L330 445 L130 470 L102 515 L47 525 L-10 560 M355 432 L350 485 L368 515 L368 562 L300 655 M283 725 L275 795 L300 850 L293 940 L178 1015 L130 1130 L38 1192 L22 1240 L-10 1265 M0 1510 L30 1538 L35 1568"/></g>
        <use class="motorway" href="#se-motorway"/>
        <use class="coast" href="#se"/>
      </svg>
      <g class="towns">
        <circle cx="1481" cy="1117.700" r="3.300"/><circle cx="1728.200" cy="1171.800" r="3.300"/><circle cx="1689.300" cy="1304" r="3.300"/><circle cx="1619.300" cy="1332" r="3.300"/><circle cx="1469" cy="1490.700" r="3.300"/><circle cx="2280.300" cy="1461" r="3.300"/><circle cx="2098" cy="1518.400" r="3.300"/><circle cx="2236.700" cy="1590" r="3.300"/><circle cx="2299.300" cy="1711.500" r="3.300"/><circle cx="1784.300" cy="1817.200" r="3.300"/><circle cx="2490" cy="1609" r="3.300"/><circle cx="2415.800" cy="1807.800" r="3.300"/>
      </g>
      <g class="cities">
        <circle cx="1930.700" cy="1088.500" r="4.800"/><circle cx="2322.300" cy="1903.400" r="4.800"/><circle cx="1896.700" cy="1909.600" r="4.800"/><circle cx="1762.900" cy="1600.300" r="4.800"/><circle cx="2550" cy="1211" r="4.800"/><circle cx="2571" cy="1353" r="4.800"/><circle cx="2657" cy="1612" r="4.800"/>
      </g>
      <g class="capital"><circle cx="2609.300" cy="1538" r="6.500"/><circle class="capital-dot" cx="2609.300" cy="1538" r="3.500"/></g>
      <g class="shields">
        <rect x="1799" y="1490" width="43.500" height="24" rx="2"/><rect x="1799" y="1720" width="43.500" height="23" rx="2"/><rect x="2490" y="1408" width="32" height="24" rx="2"/><rect x="2353" y="1488" width="34" height="24.500" rx="2"/><rect x="2421" y="1717" width="34.500" height="24.500" rx="2"/><rect x="2595" y="1875.500" width="42" height="24.500" rx="2"/><rect x="2136" y="1917" width="34.500" height="25" rx="2"/><rect x="2311" y="1986" width="34" height="25" rx="2"/>
        <text x="1821" y="1508.500">M17</text><text x="1821" y="1738">M18</text><text x="2506" y="1426">M3</text><text x="2370" y="1507">M4</text><text x="2438.500" y="1735.500">M9</text><text x="2616" y="1894">M11</text><text x="2153.500" y="1936">M8</text><text x="2328" y="2005">M9</text>
      </g>
      <g class="names">
        <text x="1480.400" y="1110">Belmullet</text><text x="1729.600" y="1166">Ballina</text><text x="1690" y="1298.500">Castlebar</text><text x="1619" y="1354">Westport</text><text x="1469" y="1483">Clifden</text><text x="1930.700" y="1077.500">Sligo</text><text x="2280" y="1454">Mullingar</text><text x="2098" y="1511">Athlone</text><text x="2238" y="1584">Tullamore</text><text x="2300" y="1706">Portlaoise</text><text x="2323" y="1894">Kilkenny</text><text x="2187" y="2048">Clonmel</text><text x="1784" y="1810">Ennis</text><text x="2550.800" y="1238">Dundalk</text><text x="2571" y="1342">Drogheda</text><text x="2640.600" y="969.300">Lisburn</text><text x="2492" y="1603">Naas</text><text x="2657" y="1600">Bray</text><text x="2415" y="1802">Carlow</text><text x="2570.700" y="2047">Wexford</text>
        <text class="city-name" x="1763" y="1590.500">Galway</text><text class="city-name" x="1896.700" y="1899.500">Limerick</text>
        <text class="capital-name" x="2610" y="1528">Dublin</text>
        <text class="country-name" x="2040" y="1663.700">Ireland</text>
      </g>
    </svg>
  </main>
</div>
</body>
</html>
```
FILE: styles.css
```css
* { box-sizing: border-box; margin: 0; padding: 0; }
body { background: #fff; font-family: Inter, "Liberation Sans", sans-serif; color: #000; }
.app { display: flex; width: 2880px; height: 2048px; overflow: hidden; }

.search-panel {
  position: relative;
  z-index: 1;
  display: flex;
  flex-direction: column;
  width: 1290px;
  padding: 863px 82px 80px 188px;
  background:
    linear-gradient(rgba(142, 176, 237, .05), rgba(142, 176, 237, .012)) right bottom / 40px 1082px no-repeat,
    linear-gradient(#f0ffff, #fff);
  box-shadow: 4px 0 20px rgba(0, 0, 0, .15);
}
.brand { font-size: 68px; line-height: 96px; font-weight: 600; letter-spacing: -.2px; white-space: nowrap; }
.brand-y { font-size: 80px; line-height: 0; font-weight: 900; letter-spacing: -3px; color: #5f9ea0; }
.hint { margin-top: 48px; font-size: 32px; line-height: 39px; }
.search-box {
  display: flex;
  align-items: center;
  justify-content: space-between;
  height: 108px;
  margin-top: 40px;
  padding: 0 30px 0 54px;
  border: 2px solid #abb2b2;
  border-radius: 20px;
}
.search-value { font-size: 32px; line-height: 39px; margin-bottom: 3px; }
.search-icon { width: 50px; height: 50px; margin-top: 2px; fill: none; stroke: #1e7eb4; stroke-width: 4; stroke-linecap: round; }
.links { display: flex; gap: 50px; margin-top: auto; font-size: 32px; line-height: 39px; font-weight: 500; letter-spacing: -.1px; color: #5f9ea0; }

.details { display: flex; flex-direction: column; width: 1590px; }
.info { height: 966px; padding: 108px 0 0 170px; }
.country { font-size: 64px; line-height: 78px; font-weight: 400; letter-spacing: -.2px; }
.region { margin-top: 7px; font-size: 32px; line-height: 39px; }
.cards { display: flex; gap: 36px; margin-top: 44px; }
.flag { display: flex; width: 380px; height: 252px; border-radius: 28px; overflow: hidden; box-shadow: 0 4px 8px rgba(0, 0, 0, .15); }
.green { width: 106.5px; background: #189b62; }
.white { width: 167px; background: #fff; }
.orange { width: 106.5px; background: #ff883e; }
.card { display: flex; flex-direction: column; gap: 22px; width: 380px; height: 252px; padding: 24px 28px; border: 2px solid #ccc; border-radius: 28px; }
.label { font-size: 40px; line-height: 48px; font-weight: 600; color: #2d2d2d; }
.value { font-size: 48px; line-height: 58px; font-weight: 600; color: #5f9ea0; white-space: nowrap; }
.card .value { text-align: center; }
.card .value-wide { padding-left: 10px; }
.facts { display: grid; grid-template-columns: 318px 1fr; grid-template-rows: 60px 60px; margin-top: 186px; }
.facts .label { padding-top: 4px; letter-spacing: -.15px; }
.facts .value { letter-spacing: -.22px; }
.facts .label-second { padding: 8px 0 0 2px; }

.map { display: block; width: 1590px; height: 1082px; background: #8eb0ed; }
.map path { vector-effect: non-scaling-stroke; stroke-linejoin: round; }
.land { fill: #aedcba; }
.islet { fill: #9bcbab; }
.upland { fill: #bbe3c8; }
.bog { fill: #b0cdbb; }
.forest { fill: #98d3a8; }
.sand { fill: #ecdbc2; }
.sand-light { fill: #f1ebe0; }
.city { fill: #e8eaed; }
.lake { fill: #8ab4f8; }
.road { fill: none; stroke: #e2b93f; stroke-width: 1.8; }
.trunk { fill: none; stroke: #f6b637; stroke-width: 3.6; }
.motorway-case { fill: none; stroke: #f8ae22; stroke-width: 6.6; }
.motorway { fill: none; stroke: #ffe9b4; stroke-width: 3; }
.county { fill: none; stroke: #68897a; stroke-width: 1.4; stroke-dasharray: 4.5 3.5; }
.border { fill: none; stroke: #5d6f6b; stroke-width: 2; }
.coast { fill: none; stroke: #e8483c; stroke-width: 4.4; stroke-dasharray: 4.4 3.6; }
.towns { fill: #fff; stroke: #666; stroke-width: 1.6; }
.cities { fill: #f1f1f4; stroke: #4c4c4c; stroke-width: 2.2; }
.capital { fill: #fff; stroke: #000; stroke-width: 2.4; }
.capital .capital-dot { fill: #000; stroke: none; }
.shields { fill: #3a78c9; font: 700 17.5px "Noto Sans", sans-serif; text-anchor: middle; }
.shields text { fill: #fff; }
.names { font: 400 23.3px Roboto, sans-serif; text-anchor: middle; fill: #4f5355; stroke: rgba(255, 255, 255, .7); stroke-width: 4px; stroke-linejoin: round; paint-order: stroke; }
.names .city-name { font-size: 23.8px; font-weight: 500; fill: #333; }
.names .capital-name { font-size: 30.5px; font-weight: 500; fill: #202124; }
.names .country-name { font-size: 43.8px; font-weight: 700; fill: #202124; }
```
